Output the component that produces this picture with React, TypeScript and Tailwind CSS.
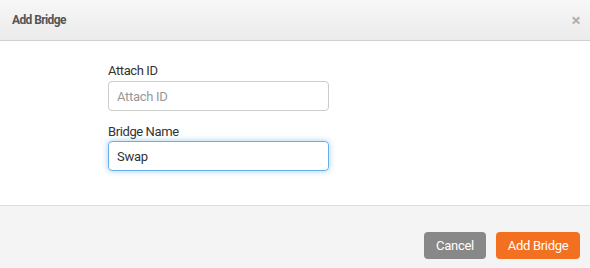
import React from 'react';

export default function App() {
  return (
    <div className="w-[590px] h-[268px] bg-white flex flex-col overflow-hidden" style={{ fontFamily: 'Roboto, "Liberation Sans", sans-serif' }}>
      <div className="h-[41px] flex items-center justify-between pl-3 pr-[6px] bg-gradient-to-b from-[#f7f7f7] to-[#ebebeb] border-b border-[#d0d0d0]">
        <h2 className="text-[12px] font-bold tracking-[-0.6px] text-[#555]">Add Bridge</h2>
        <button className="w-4 h-4 flex items-center justify-center text-[#b0b0b0] text-[17px] font-bold leading-none">×</button>
      </div>

      <div className="h-[165px] pt-[20px] pl-[108px] border-b border-[#dcdcdc]">
        <div className="w-[221px] flex flex-col">
          <label className="text-[13px] tracking-[-0.4px] leading-[20px] text-[#333]">Attach ID</label>
          <input
            placeholder="Attach ID"
            className="h-[30px] w-full rounded border border-[#cccccc] px-[8px] text-[13px] tracking-[-0.3px] text-[#333] placeholder:text-[#999] outline-none"
          />
          <label className="text-[13px] tracking-[-0.4px] leading-[20px] text-[#333] mt-[11px] mb-[-1px]">Bridge Name</label>
          <input
            defaultValue="Swap"
            className="h-[30px] w-full rounded border border-[#66afe9] px-[8px] text-[13px] tracking-[-0.3px] text-[#333] outline-none shadow-[0_0_6px_rgba(102,175,233,0.6)]"
          />
        </div>
      </div>

      <div className="flex-1 bg-[#f4f4f4] flex justify-end items-start pt-[26px] pr-[10px] gap-[10px]">
        <button className="h-[27px] w-[62px] rounded bg-[#888888] text-white text-[13px] tracking-[-0.3px]">Cancel</button>
        <button className="h-[27px] w-[84px] rounded bg-[#f37021] text-white text-[13px] tracking-[-0.3px]">Add Bridge</button>
      </div>
    </div>
  );
}
